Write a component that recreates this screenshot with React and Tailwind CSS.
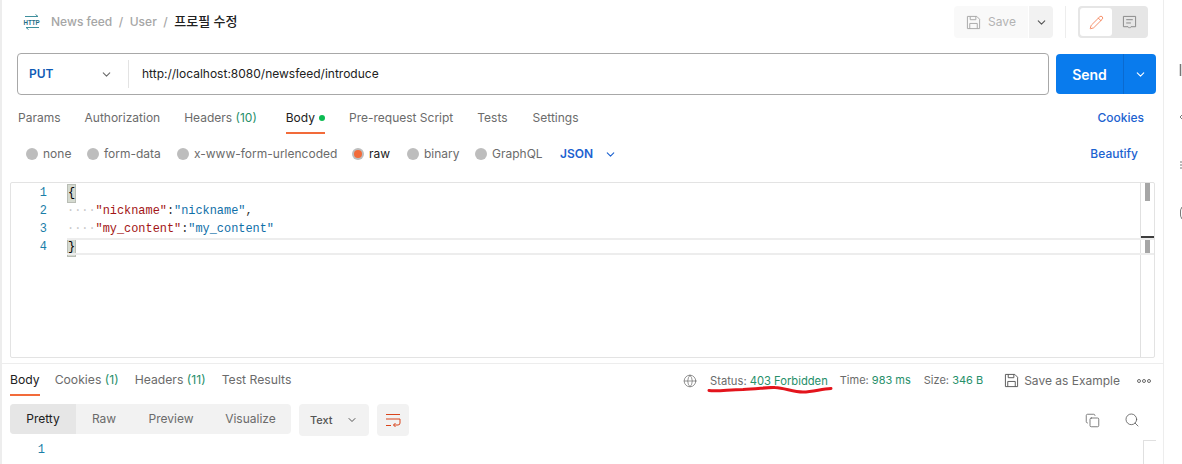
import { ChevronDown, Pencil, Globe, Copy, Search } from 'lucide-react';

const font = { fontFamily: 'Inter, "Noto Sans CJK KR", sans-serif' };
const mono = { fontFamily: '"Liberation Mono", monospace' };

const requestTabs = [
  { label: 'Params' },
  { label: 'Authorization' },
  { label: 'Headers', count: '(10)' },
  { label: 'Body', active: true, dot: true },
  { label: 'Pre-request Script' },
  { label: 'Tests' },
  { label: 'Settings' },
];

const responseTabs = [
  { label: 'Body', active: true },
  { label: 'Cookies', count: '(1)' },
  { label: 'Headers', count: '(11)' },
  { label: 'Test Results' },
];

const bodyTypes = [
  { label: 'none', w: 'w-[61px]' },
  { label: 'form-data', w: 'w-[90px]' },
  { label: 'x-www-form-urlencoded', w: 'w-[175px]' },
  { label: 'raw', checked: true, w: 'w-[55px]' },
  { label: 'binary', w: 'w-[68px]' },
  { label: 'GraphQL', w: 'w-[85px]' },
];

const bracket = 'inline-block ml-px w-[7px] h-[17px] leading-[17px] text-center bg-[#d5dad0] outline outline-1 outline-[#b9bdb5] text-black';

const codeLines = [
  <span className={bracket}>{'{'}</span>,
  <>
    <span className="text-[#c9c9c9]">····</span>
    <span className="text-[#a31515]">"nickname"</span>
    <span>:</span>
    <span className="text-[#0f6fa8]">"nickname"</span>
    <span>,</span>
  </>,
  <>
    <span className="text-[#c9c9c9]">····</span>
    <span className="text-[#a31515]">"my_content"</span>
    <span>:</span>
    <span className="text-[#0f6fa8]">"my_content"</span>
  </>,
  <span className={bracket}>{'}'}</span>,
];

function HttpIcon() {
  return (
    <svg width="18" height="18" viewBox="0 0 18 18" fill="none" className="shrink-0">
      <path d="M2 3.500h13M12.500 1.500l2.500 2" stroke="#3f8f9c" strokeWidth="1" />
      <path d="M3 14.500h13M5.500 16.500l-2.500-2" stroke="#3f8f9c" strokeWidth="1" />
      <text transform="translate(0.500 12) scale(1 1.250)" fontSize="6.200" fontWeight="700" fill="#1f6f86" style={{ fontFamily: 'Liberation Sans, sans-serif' }}>HTTP</text>
    </svg>
  );
}

function FloppyIcon({ className }) {
  return (
    <svg width="15" height="15" viewBox="0 0 16 16" fill="none" stroke="currentColor" strokeWidth="1" className={className}>
      <path d="M1.500 1.500h10l3 3v10h-13z" />
      <path d="M4.500 1.500v3.500h6v-3.500M4 14.500v-5.500h8v5.500" />
    </svg>
  );
}

function CommentIcon() {
  return (
    <svg width="15" height="15" viewBox="0 0 16 16" fill="none" stroke="#858585" strokeWidth="1">
      <path d="M1.500 1.500h13v11h-5l-1.500 1.500-1.500-1.500h-5z" />
      <path d="M4.500 5h7M4.500 8.500h5" />
    </svg>
  );
}

function WrapIcon() {
  return (
    <svg width="16" height="16" viewBox="0 0 16 16" fill="none" stroke="#d9451c" strokeWidth="1">
      <path d="M1 2.500h14M1 7h14M1 13.500h5" />
      <path d="M15 7v4a2 2 0 0 1-2 2H8.500M10.500 11l-2 2 2 2" />
    </svg>
  );
}

function DotsIcon() {
  return (
    <svg width="14" height="6" viewBox="0 0 14 6" fill="none" stroke="#6b6b6b" strokeWidth="1" className="ml-[17px]">
      <circle cx="2" cy="3" r="1.500" />
      <circle cx="7" cy="3" r="1.500" />
      <circle cx="12" cy="3" r="1.500" />
    </svg>
  );
}

function Count({ children }) {
  return <span className="text-[#268f6a]"> {children}</span>;
}

export default function App() {
  return (
    <div className="w-[1182px] h-[464px] overflow-hidden flex bg-white text-[#6b6b6b] text-[12px]" style={font}>
      <div className="w-[2px] bg-[#ededed] shrink-0" />
      <main className="w-[1161px] shrink-0 flex flex-col">
        {/* title row */}
        <div className="h-[54px] shrink-0 flex items-start pt-[6px] pl-[21px] pr-[15px]">
          <div className="flex items-center h-[32px]">
            <HttpIcon />
            <div className="ml-[10px] flex items-center gap-[6.500px] font-medium text-[#a6a6a6]">
              <span>News feed</span>
              <span>/</span>
              <span>User</span>
              <span>/</span>
              <span className="text-[#212121] text-[13px]">프로필 수정</span>
            </div>
          </div>
          <div className="ml-auto flex items-center">
            <div className="flex h-[32px] rounded-[4px] overflow-hidden">
              <div className="w-[74px] bg-[#f9f9f9] flex items-center justify-center gap-[7px] text-[#b3b3b3]">
                <FloppyIcon className="text-[#a6a6a6]" />
                <span>Save</span>
              </div>
              <div className="ml-px w-[24px] bg-[#f2f2f2] flex items-center justify-center">
                <ChevronDown size={13} className="text-[#555]" />
              </div>
            </div>
            <div className="w-px h-[32px] bg-[#ededed] mx-[12px]" />
            <div className="flex h-[32px] w-[70px] rounded-[4px] bg-[#e6e6e6] p-[2px]">
              <div className="w-[32px] bg-white rounded-[3px] flex items-center justify-center">
                <Pencil size={15} strokeWidth={1.2} className="text-[#f26b3a]" />
              </div>
              <div className="flex-1 flex items-center justify-center">
                <CommentIcon />
              </div>
            </div>
          </div>
        </div>

        {/* url row */}
        <div className="flex h-[40px] shrink-0 pl-[15px] items-start">
          <div className="w-[1032px] h-[42px] -mt-px border border-[#a8a8a8] rounded-[4px] flex items-center">
            <div className="w-[111px] pl-[11px] pr-[15px] flex items-center justify-between border-r border-[#e3e3e3] h-[28px]">
              <span className="text-[#0f5bb5] font-semibold">PUT</span>
              <ChevronDown size={13} className="text-[#6b6b6b]" />
            </div>
            <span className="pl-[13px] text-[#212121]">http://localhost:8080/newsfeed/introduce</span>
          </div>
          <div className="ml-[7px] w-[100px] h-[40px] rounded-[4px] bg-[#097bed] text-white flex items-center">
            <span className="w-[67px] text-center font-semibold text-[14px]">Send</span>
            <div className="flex-1 h-full border-l border-[#0a6ad0] flex items-center justify-center">
              <ChevronDown size={13} />
            </div>
          </div>
        </div>

        {/* request tabs */}
        <div className="h-[40px] shrink-0 mt-[2px] pl-[16px] pr-[19px] flex items-start">
          <div className="flex gap-[24px]">
            {requestTabs.map(tab => (
              <div
                key={tab.label}
                className={`flex items-center gap-[4px] h-[38px] pt-[12px] pb-[4px] border-b-2 ${tab.active ? 'ml-[5px] border-[#f26b3a] text-[#212121]' : 'border-transparent'} ${tab.label === 'Settings' ? 'ml-px' : ''}`}
              >
                <span>{tab.label}{tab.count && <Count>{tab.count}</Count>}</span>
                {tab.dot && <span className="w-[6px] h-[6px] rounded-full bg-[#0cbb52]" />}
              </div>
            ))}
          </div>
          <span className="ml-auto h-[38px] flex items-center pt-[12px] pb-[6px] text-[#1c62d0] font-medium">Cookies</span>
        </div>

        {/* body types */}
        <div className="h-[36px] shrink-0 pl-[24px] pr-[25px] flex items-center">
          {bodyTypes.map(item => (
            <div key={item.label} className={`${item.w} shrink-0 flex items-center gap-[5px] whitespace-nowrap`}>
              {item.checked ? (
                <span className="w-[12px] h-[12px] rounded-full bg-[#bdbdbd] flex items-center justify-center">
                  <span className="w-[8px] h-[8px] rounded-full bg-[#f26b3a]" />
                </span>
              ) : (
                <span className="w-[12px] h-[12px] rounded-full bg-[#bdbdbd]" />
              )}
              <span className={item.checked ? 'text-[#212121]' : ''}>{item.label}</span>
            </div>
          ))}
          <div className="flex items-center gap-[11px] text-[#1c62d0] font-semibold">
            <span>JSON</span>
            <ChevronDown size={13} />
          </div>
          <span className="ml-auto text-[#1c62d0] font-medium">Beautify</span>
        </div>

        {/* editor */}
        <div className="relative shrink-0 mt-[10px] ml-[8px] mr-[8px] h-[176px] border border-[#e3e3e3] rounded-[2px] flex" style={mono}>
          <div className="flex-1 pt-[1px]">
            {codeLines.map((line, i) => (
              <div key={i} className="flex h-[18px] text-[11.900px] leading-[18px]">
                <span className="w-[36px] text-right text-[#1a7ea8] shrink-0">{i + 1}</span>
                <span className="ml-[20px] text-[#333] whitespace-pre">{line}</span>
              </div>
            ))}
          </div>
          <div className="w-[14px] border-l border-[#e0e0e0] relative">
            <div className="absolute left-[4px] top-0 w-[5px] h-[18px] bg-[#a6a6a6]" />
            <div className="absolute left-[4px] top-[55px] w-[5px] h-[17px] bg-[#a6a6a6]" />
            <div className="absolute left-0 right-0 top-[53px] h-[2px] bg-[#3d3d3d]" />
          </div>
          {/* active line band */}
          <div className="absolute left-[56px] right-0 top-[55px] h-[17px] border-y-2 border-[#ededed] pointer-events-none" />
        </div>

        <div className="h-px shrink-0 bg-[#ededed] mt-[5px]" />

        {/* response header */}
        <div className="h-[32px] shrink-0 flex items-start pl-[8px] pr-[12px]">
          <div className="flex gap-[16px]">
            {responseTabs.map(tab => (
              <div key={tab.label} className={`h-[32px] pt-[8px] pb-[6px] flex items-center border-b-2 ${tab.active ? '-mr-px border-[#f26b3a] text-[#212121]' : 'border-transparent'}`}>
                <span className="text-[12.200px]">{tab.label}{tab.count && <Count>{tab.count}</Count>}</span>
              </div>
            ))}
          </div>
          <div className="ml-auto h-[32px] pt-[1px] flex items-center">
            <Globe size={14} strokeWidth={1.2} className="text-[#6b6b6b]" />
            <div className="relative ml-[13px]">
              <span className="text-[11.200px]">Status: <span className="text-[#268f6a]">403 Forbidden</span></span>
              <svg className="absolute -left-[3px] top-[14px]" width="126" height="10" viewBox="0 0 126 10" fill="none">
                <path d="M2 4.500C12 5.500 22 3.500 36 3.500C50 3 62 1 68 1.500C78 2 86 6 96 6C106 6 114 3 124 2.500" stroke="#e3141c" strokeWidth="3" strokeLinecap="round" />
              </svg>
            </div>
            <span className="ml-[12px] text-[11px]">Time: <span className="text-[#268f6a]">983 ms</span></span>
            <span className="ml-[13px] text-[11px]">Size: <span className="text-[#268f6a]">346 B</span></span>
            <FloppyIcon className="ml-[21px] text-[#555]" />
            <span className="ml-[5px]">Save as Example</span>
            <DotsIcon />
          </div>
        </div>

        {/* response toolbar */}
        <div className="flex shrink-0 items-start pl-[8px] pr-[23px] mt-[8px]">
          <div className="flex h-[30px] w-[281px] rounded-[4px] bg-[#f2f2f2] overflow-hidden">
            <div className="w-[66px] bg-[#e6e6e6] text-[#212121] flex items-center justify-center">Pretty</div>
            <div className="w-[56px] flex items-center justify-center">Raw</div>
            <div className="w-[78px] flex items-center justify-center">Preview</div>
            <div className="w-[81px] flex items-center justify-center">Visualize</div>
          </div>
          <div className="ml-[8px] w-[70px] h-[32px] rounded-[4px] bg-[#f2f2f2] flex items-center justify-between px-[11px] text-[#555] font-medium text-[11px]">
            <span>Text</span>
            <ChevronDown size={12} />
          </div>
          <div className="ml-[8px] w-[32px] h-[32px] rounded-[4px] bg-[#f2f2f2] flex items-center justify-center">
            <WrapIcon />
          </div>
          <div className="ml-auto flex items-center gap-[24px] h-[32px]">
            <Copy size={15} strokeWidth={1.2} className="text-[#555]" />
            <Search size={16} strokeWidth={1.2} className="text-[#555]" />
          </div>
        </div>

        {/* response body */}
        <div className="flex h-[24px] shrink-0 mt-[4px] pr-[7px] pt-px text-[12px] leading-[18px]" style={mono}>
          <span className="w-[43px] text-right text-[#1a7ea8]">1</span>
          <div className="ml-auto -mt-px w-[13px] border-l border-t border-[#e0e0e0]" />
        </div>
      </main>
      <div className="w-px bg-[#ededed] shrink-0" />
      {/* sidebar icons, cut off by the window edge */}
      <svg width="18" height="464" viewBox="0 0 18 464" fill="none" stroke="#777" strokeWidth="1" className="shrink-0">
        <path d="M16.500 64v12" strokeWidth="1.500" />
        <path d="M18 115l-2 2 2 2" />
        <path d="M16 162h2M16 165h2M16 168h2" />
        <path d="M18 207a8 8 0 0 0-1.500 6a8 8 0 0 0 1.500 6" />
      </svg>
    </div>
  );
}
